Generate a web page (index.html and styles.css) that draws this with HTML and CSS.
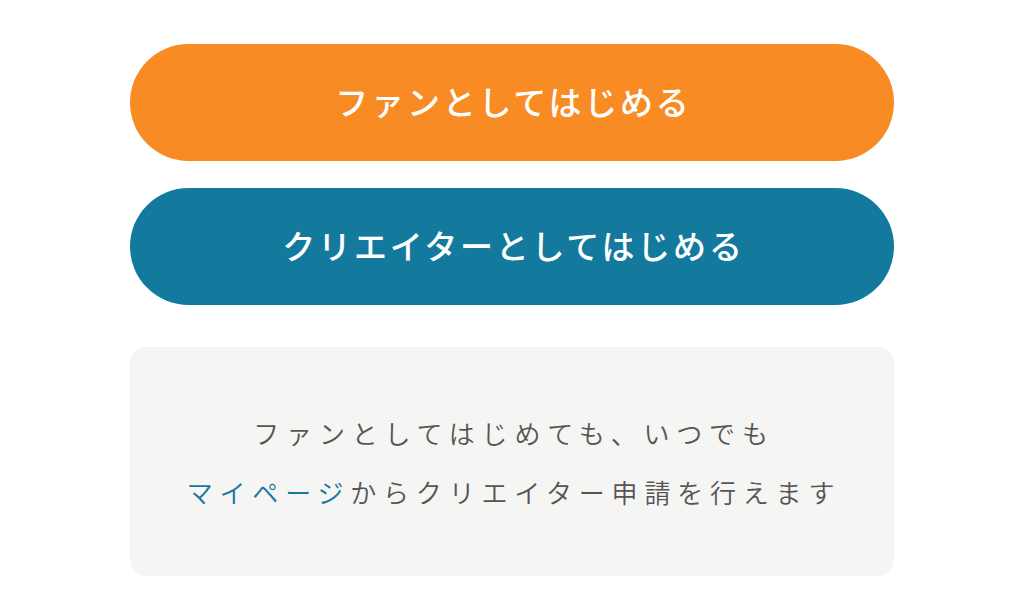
FILE: index.html
```html
<!DOCTYPE html>
<html lang="ja">
<head>
<meta charset="utf-8">
<link rel="stylesheet" href="styles.css">
</head>
<body>
<main class="wrap">
  <a class="btn btn-fan" href="#">ファンとしてはじめる</a>
  <a class="btn btn-creator" href="#">クリエイターとしてはじめる</a>
  <div class="note">
    <p>ファンとしてはじめても、いつでも</p>
    <p><a class="link" href="#">マイページ</a>からクリエイター申請を行えます</p>
  </div>
</main>
</body>
</html>
```
FILE: styles.css
```css
* { box-sizing: border-box; }
html, body { margin: 0; padding: 0; background: #fff; }
body {
  font-family: "Noto Sans CJK JP", "Noto Sans", sans-serif;
}
.wrap {
  width: 764px;
  margin: 0 auto;
  padding-top: 44px;
  display: flex;
  flex-direction: column;
}
.btn {
  display: flex;
  align-items: center;
  justify-content: center;
  height: 117px;
  border-radius: 59px;
  color: #fff;
  text-decoration: none;
  font-size: 33px;
  font-weight: 500;
  letter-spacing: 2.8px;
  padding-left: 3px;
  padding-bottom: 4px;
}
.btn-fan { background: #F98B24; }
.btn-creator { background: #137A9D; margin-top: 27px; }
.note {
  margin-top: 42px;
  height: 229px;
  background: #F5F5F4;
  border-radius: 16px;
  display: flex;
  flex-direction: column;
  justify-content: center;
  align-items: center;
  color: #555;
  font-size: 26px;
  font-weight: 350;
  letter-spacing: 6.8px;
  line-height: 59px;
  padding-left: 4px;
}
.note p { margin: 0; }
.link { color: #1878A0; text-decoration: none; }
```
